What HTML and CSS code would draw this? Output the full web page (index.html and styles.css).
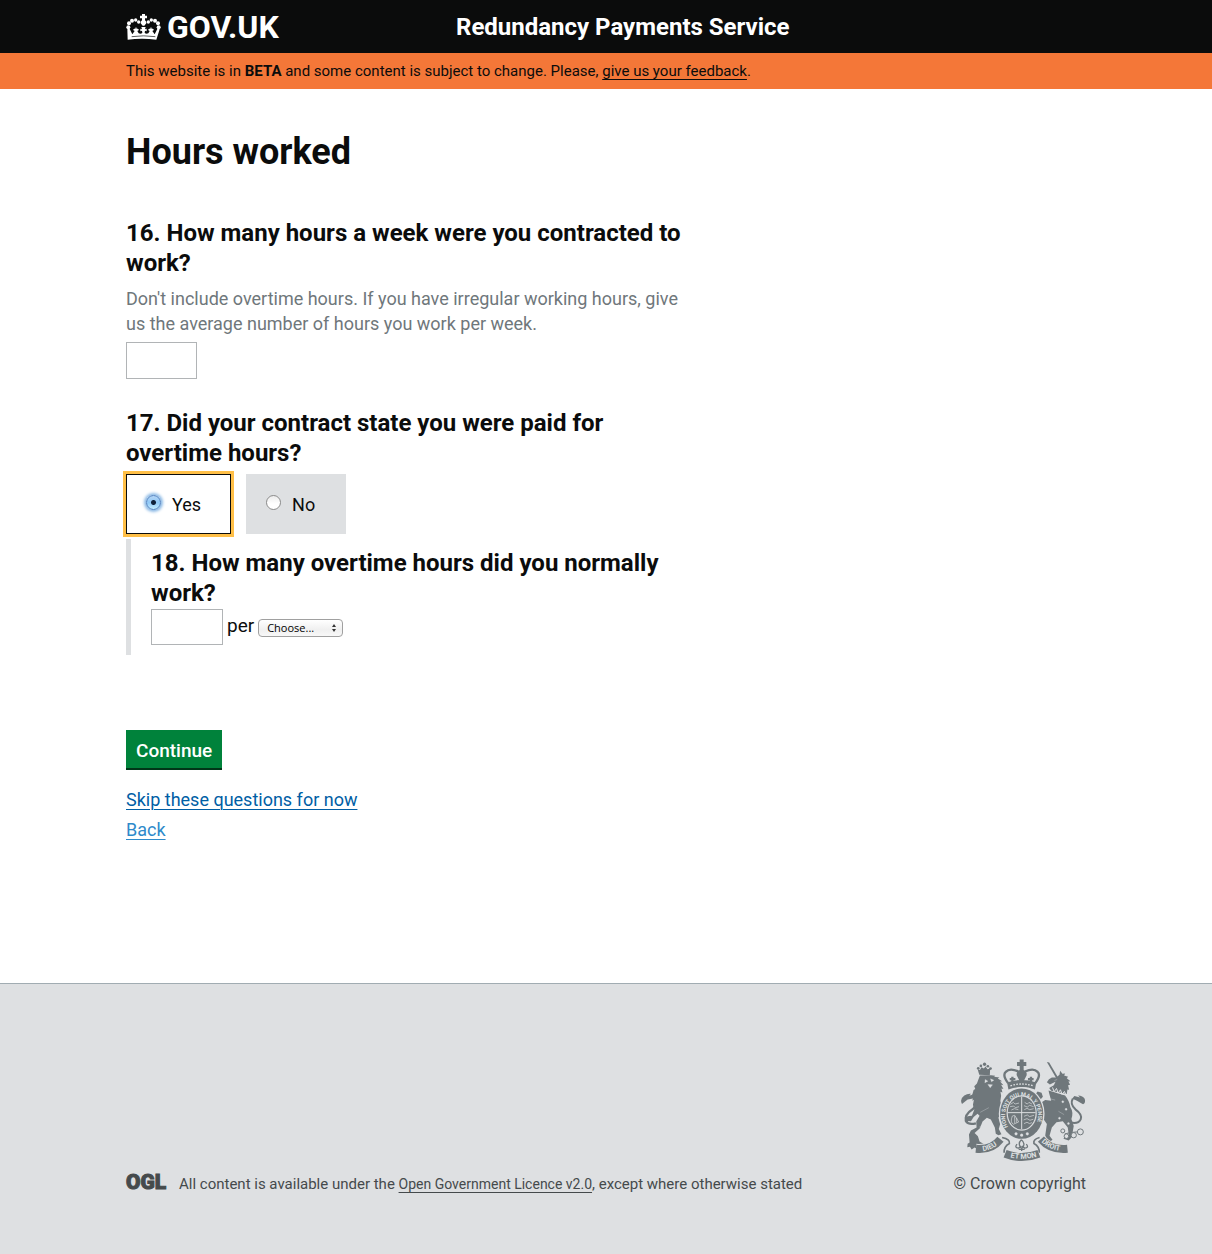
FILE: index.html
```html
<!DOCTYPE html>
<html lang="en">
<head>
<meta charset="utf-8">
<meta name="viewport" content="width=device-width, initial-scale=1">
<title>Hours worked - Redundancy Payments Service</title>
<link rel="stylesheet" href="styles.css">
</head>
<body>
<header class="site-header">
  <div class="container header-row">
    <a class="logo" href="#">
      <svg class="crown" viewBox="0 0 105 78" aria-hidden="true">
        <g fill="#fff">
          <path d="M48 0h9v5h6v8h-6v6q6 4 4 9l-6 7h-5l-6-7q-2-5 4-9v-6h-6V5h6z"/>
          <circle cx="7" cy="40" r="6"/><circle cx="9" cy="28" r="6"/><circle cx="18" cy="20" r="6"/><circle cx="29" cy="18" r="5"/><circle cx="38" cy="24" r="5"/>
          <circle cx="98" cy="40" r="6"/><circle cx="96" cy="28" r="6"/><circle cx="87" cy="20" r="6"/><circle cx="76" cy="18" r="5"/><circle cx="67" cy="24" r="5"/>
          <path d="M4 46l6-3 9 18 7-10-5-3 3-4h4l2-6 2 6h4l3 4-5 3 4 7q6 3 11-1l-1-7-5 2v-8l5 2-2-7h13l-2 7 5-2v8l-5-2-1 7q5 4 11 1l4-7-5-3 3-4h4l2-6 2 6h4l3 4-5 3 7 10 9-18 6 3-10 31q-43-6-86 0z"/>
        </g>
        <path d="M17 68q36-5 71 0" fill="none" stroke="#0b0c0c" stroke-width="2"/>
      </svg>
      <span>GOV.UK</span>
    </a>
    <a class="service-name" href="#">Redundancy Payments Service</a>
  </div>
</header>
<div class="beta-bar">
  <p class="container">This website is in <strong>BETA</strong> and some content is subject to change. Please, <a href="#">give us your feedback</a>.</p>
</div>
<main class="container">
  <h1>Hours worked</h1>
  <form class="questions">
    <div class="question">
      <label class="question-title" for="hours">16. How many hours a week were you contracted to work?</label>
      <p class="hint" id="hours-hint">Don't include overtime hours. If you have irregular working hours, give us the average number of hours you work per week.</p>
      <input class="text-box" id="hours" type="text" aria-describedby="hours-hint">
    </div>
    <fieldset class="question">
      <legend class="question-title">17. Did your contract state you were paid for overtime hours?</legend>
      <div class="choices">
        <label class="choice selected"><input type="radio" name="overtime" checked>Yes</label>
        <label class="choice"><input type="radio" name="overtime">No</label>
      </div>
      <div class="panel">
        <label class="question-title" for="overtime-hours">18. How many overtime hours did you normally work?</label>
        <div class="rate">
          <input class="text-box" id="overtime-hours" type="text">
          <label for="period">per</label>
          <span class="select-wrap">
            <select id="period"><option>Choose...</option></select>
            <svg viewBox="0 0 6 8" aria-hidden="true"><path d="M3 0l2 3H1zM3 8l2-3H1z" fill="#333"/></svg>
          </span>
        </div>
      </div>
    </fieldset>
    <button class="continue" type="submit">Continue</button>
    <div class="form-links">
      <a href="#">Skip these questions for now</a>
      <a class="back" href="#">Back</a>
    </div>
  </form>
</main>
<footer class="site-footer">
  <div class="container footer-row">
    <div class="licence">
      <svg class="ogl" viewBox="0 0 42 24" role="img" aria-label="Open Government Licence"><text x="0" y="19">OGL</text></svg>
      <p>All content is available under the <a href="#">Open Government Licence v2.0</a>, except where otherwise stated</p>
    </div>
    <a class="copyright" href="#">
      <svg class="arms" viewBox="30 24 380 312" aria-hidden="true">
        <defs>
          <path id="belt" d="M175 231A50 59 0 1 1 257 231"/>
          <path id="ribbon-left" d="M99 304Q131 300 152 277"/>
          <path id="ribbon-mid" d="M178 322Q216 333 262 321"/>
          <path id="ribbon-right" d="M275 276Q300 301 336 303"/>
        </defs>
        <g class="ink">
          <path d="M88 74l-5-18 7 3 5-8 7 4 5-6 6 8 8-2-1 20z"/>
          <circle cx="85" cy="54" r="4"/><circle cx="93" cy="47" r="4"/><circle cx="104" cy="42" r="5"/><circle cx="114" cy="48" r="4"/><circle cx="122" cy="55" r="4"/>
          <path d="M90 76l34-1 12 2-3 3 16 2-5 3 13 8-6 1 10 11-7-1 7 13-6-2 3 12-6-2 2 12q-4 16 0 26 4 20-8 40l5 20-4 14 8 16-9 3-8-4-3-19-12-24-12-6-13 12-8 20-16 14 10 10 5 16 16 10-4 8-12-2-6 7-9-5-9 6-5-8-8 1 1-10 6-4-2-24 6-12 17-9-1-18 10-18-6-6-12 10-8 13-8-1-4 6-7-5 1-8 8-7 13-2 7-18-4-15 3-15-5 3 4-16-5 2 5-18 5-3-3-9 8-8z"/>
          <path d="M53 148l-17 14q-8-15 7-26 9-6 20-5l-5 6 16-6 7 6-12 8z"/>
          <path d="M292 35l7 2 28 47-5 3z"/>
          <path d="M320 82l10-8 2-12 7 9 8-1-3 6 12 4-4 4 11 9-6 1 5 10-6 1 3 14-5-1-2 14-47-10-6-8 14-9 5-10-17 8-9-7q5-10 15-14z"/>
          <path d="M297 121l50 15q14 18 16 36 10 15 3 35l7 21-6 34-9 10-16-5 5-8 11-4-3-22-15-19-19 3-14 16-7 25 9 12-14 10-11-4 2-8 5-2-4-9 5-35-10-14-12-10-6-23-13-10 1-13 9-7-4-12 7-9 12 4 4 12-8 9-6-2-4 8 12 3 13-8 18 2-6-22z"/>
          <path d="M384 153l17 10q9-5 5-17-5-9-20-10l6 6-17-4-7 8 10 4z"/>
        </g>
        <g class="line">
          <path d="M77 140q13 17-8 37-28 18-20 38 7 10 29 5" stroke-width="7"/>
          <path d="M370 146q-9 16 8 32 22 16 16 30-6 14-29 10" stroke-width="6"/>
          <path d="M346 252l18-4 20-2" stroke-width="3"/>
          <circle class="chain" cx="340" cy="243" r="6"/><circle class="chain" cx="351" cy="259" r="7"/><circle class="chain" cx="373" cy="256" r="8"/><circle class="chain" cx="393" cy="246" r="9"/>
        </g>
        <g class="cut">
          <path d="M106 88l8 5-9 5zM122 86l10 4-7 5zM114 103l14 1-7 9zM91 187l26-14M106 219l-18 13M315 91l8-3M296 145l21 5M327 184l17 10"/>
          <circle cx="340" cy="155" r="3"/><circle cx="350" cy="178" r="3"/><circle cx="330" cy="205" r="3"/><circle cx="357" cy="221" r="3"/>
          <path class="collar" d="M309 112l5 13 7-10 5 14 7-10 5 14 7-9 5 12"/>
        </g>
        <g class="ink">
          <path d="M172 97q44-15 88 0l-4 21q-40-15-80 0z"/>
          <path d="M210 28h12v7h8v12h-8v12q11 5 9 16l-9 18h-12l-9-18q-2-11 9-16V47h-8V35h8z"/>
        </g>
        <g class="line">
          <path d="M175 99q-18-24-7-34 12-13 38-1M257 99q18-24 7-34-12-13-38-1" stroke-width="7"/>
          <path d="M188 80v16M180 87h17M244 80v16M235 87h17" stroke-width="7"/>
        </g>
        <path class="jewels" d="M182 107q34-11 68 0"/>
        <ellipse class="halo" cx="216" cy="191" rx="69" ry="80"/>
        <ellipse class="ink" cx="216" cy="191" rx="65" ry="76"/>
        <ellipse class="cut" cx="216" cy="189" rx="45" ry="53"/>
        <ellipse class="ink" cx="216" cy="189" rx="42" ry="50"/>
        <path class="cut seam" d="M216 140v98M174 188h84"/>
        <path class="details" d="M182 163l9-6 5 5 12-3M181 170l11-2 5 5 11-3M185 180l9-4 12 3M225 157l8 5 5-5 9 5M223 167l10 4 7-5 12 4M224 179l8-4 8 4 12-3M188 198q-8 19 3 25l16-7-12-20zM195 198v22M201 204v14M223 199l10-4 7 5 13-4M222 210l10-4 9 5 10-3M223 221l9-4 8 4 7-3"/>
        <text class="motto"><textPath href="#belt">HONI SOIT QUI MAL Y PENSE</textPath></text>
        <circle class="cut" cx="199" cy="252" r="4"/><circle class="cut" cx="216" cy="256" r="4"/><circle class="cut" cx="233" cy="252" r="4"/>
        <g class="ribbon-edge">
          <path d="M78 297Q125 302 152 268"/>
          <path d="M274 268Q303 302 354 297"/>
        </g>
        <g class="ribbon">
          <path d="M78 297Q125 302 152 268"/>
          <path d="M274 268Q303 302 354 297"/>
        </g>
        <g class="fold">
          <path d="M157 263q25 5 22 18-17 9-16 28"/>
          <path d="M270 263q-20 5-17 18 17 9 16 28"/>
        </g>
        <path class="ribbon-edge" d="M166 312Q216 332 268 312"/>
        <path class="ribbon" d="M166 312Q216 332 268 312"/>
        <path class="fleur" d="M215 270q-12 12-1 24h4q11-12-3-24M202 283q-9 11 5 12l8-6M230 283q9 11-5 12l-8-6M207 299h18M216 292v12"/>
        <g class="motto large">
          <text><textPath href="#ribbon-left">DIEU</textPath></text>
          <text><textPath href="#ribbon-mid" startOffset="4">ET MON</textPath></text>
          <text><textPath href="#ribbon-right">DROIT</textPath></text>
        </g>
      </svg>
      <span>© Crown copyright</span>
    </a>
  </div>
</footer>
</body>
</html>
```
FILE: styles.css
```css
* { box-sizing: border-box; }
body {
  margin: 0;
  background: #fff;
  color: #0b0c0c;
  font-family: Roboto, "Liberation Sans", sans-serif;
  font-size: 19px;
  line-height: 25px;
}
h1, p, fieldset, legend { margin: 0; padding: 0; border: 0; }
.container { width: calc(100% - 60px); max-width: 960px; margin: 0 auto; }

.site-header { background: #0b0c0c; }
.header-row { display: grid; grid-template-columns: 330px 1fr; align-items: center; min-height: 53px; }
.header-row a { color: #fff; text-decoration: none; font-weight: 700; }
.logo { display: flex; align-items: center; gap: 6px; font-size: 32px; line-height: 32px; }
.crown { width: 35px; height: 26px; }
.service-name { font-size: 24px; line-height: 30px; }

.beta-bar { background: #f47738; font-size: 15px; line-height: 20px; padding: 8px 0; }
.beta-bar a { color: inherit; }
a { text-underline-offset: 3px; text-decoration-thickness: 1px; }

h1 { font-size: 36px; line-height: 40px; padding: 43px 0 46px; }
.questions { width: 60%; }
.question { margin-bottom: 29px; }
.question-title { display: block; font-size: 24px; line-height: 30px; font-weight: 700; }
.hint { color: #6f777b; font-size: 18px; margin: 8px 0 6px; padding-right: 8px; }
.text-box { display: block; width: 71px; height: 37px; border: 1px solid #b1b4b6; background: #fff; font: inherit; padding: 4px; }

.choices { display: flex; gap: 15px; margin-top: 6px; }
.choice { display: flex; align-items: center; gap: 11px; height: 60px; padding: 0 31px 0 20px; background: #dee0e2; font-size: 18px; }
.choice.selected { background: #fff; border: 1px solid #0b0c0c; outline: 3px solid #ffbf47; padding: 0 29px 0 19px; }
.choice input {
  appearance: none; width: 15px; height: 15px; margin: 0 0 4px; border-radius: 50%;
  border: 1px solid #8b8b8b; background: linear-gradient(#ececec, #fff 60%);
}
.choice input:checked {
  border-color: #4b7fc0;
  background: radial-gradient(circle, #10213b 0 2px, transparent 3px), linear-gradient(#b5d5f5, #8fc8f7 50%, #c6edff);
  box-shadow: 0 0 3px 2px #8bb9e5;
}
.panel { margin-top: 5px; padding: 9px 0 10px 20px; border-left: 5px solid #dee0e2; }
.rate { display: flex; align-items: center; gap: 4px; margin-top: 1px; }
.rate .text-box { width: 72px; height: 36px; }
.rate label { padding-bottom: 4px; }
.select-wrap { display: grid; align-items: center; margin-top: 2px; }
.select-wrap > * { grid-area: 1 / 1; }
.select-wrap svg { width: 6px; height: 8px; justify-self: end; margin-right: 6px; pointer-events: none; }
select {
  appearance: none; width: 85px; height: 18px; border: 1px solid #a0a0a0; border-radius: 4px;
  background: linear-gradient(#fff, #f0f0f0 60%, #f8f8f8); color: #000; padding: 0 8px;
  font-family: "Open Sans", sans-serif; font-size: 11px; line-height: 16px;
}
.continue {
  display: block; margin-top: 75px; height: 40px; padding: 0 10px; border: 0;
  background: #00823b; box-shadow: inset 0 -2px #003618; color: #fff;
  font: inherit; font-weight: 500;
}
.form-links { display: flex; flex-direction: column; align-items: flex-start; gap: 5px; margin-top: 17px; font-size: 18px; }
.form-links a { color: #005ea5; }
.form-links .back { color: #2e8aca; }

.site-footer { margin-top: 141px; border-top: 1px solid #a1acb2; background: #dee0e2; color: #454a4c; font-size: 16px; line-height: 20px; padding: 74px 0 60px; }
.site-footer a { color: inherit; }
.footer-row { display: flex; justify-content: space-between; align-items: flex-end; }
.licence { display: flex; align-items: flex-end; gap: 11px; font-size: 15px; }
.licence a { font-size: 14px; }
.ogl { width: 42px; height: 24px; overflow: visible; }
.ogl text { font-family: Roboto, sans-serif; font-size: 21px; font-weight: 900; fill: #454a4c; stroke: #454a4c; stroke-width: 1px; }
.site-footer .copyright { display: flex; flex-direction: column; align-items: flex-end; gap: 12px; text-decoration: none; }
.arms { width: 126px; height: 104px; }
.ink { fill: #6f777b; }
.line { fill: none; stroke: #6f777b; stroke-width: 3px; }
.chain { fill: #dee0e2; }
.cut { fill: #dee0e2; stroke: #dee0e2; stroke-width: 1px; }
.cut .collar { fill: none; stroke-width: 3px; }
.seam { stroke-width: 3px; }
.halo { fill: #dee0e2; }
.jewels { fill: none; stroke: #dee0e2; stroke-width: 4px; stroke-dasharray: 5 4; }
.details { fill: none; stroke: #dee0e2; stroke-width: 2px; }
.ribbon-edge { fill: none; stroke: #dee0e2; stroke-width: 30px; }
.ribbon { fill: none; stroke: #6f777b; stroke-width: 24px; }
.fold { fill: none; stroke: #6f777b; stroke-width: 5px; }
.fleur { fill: none; stroke: #6f777b; stroke-width: 4px; }
.motto { font-family: Roboto, sans-serif; font-size: 17px; font-weight: 700; fill: #dee0e2; }
.motto.large { font-size: 22px; }
```
